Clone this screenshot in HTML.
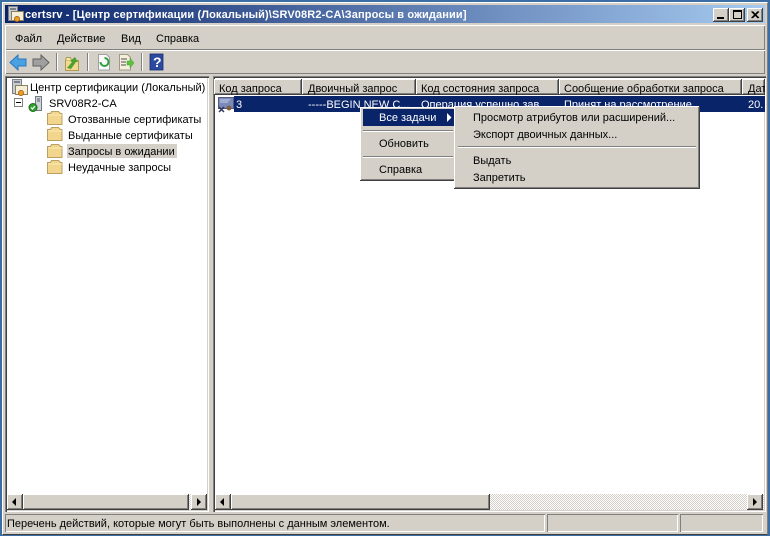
<!DOCTYPE html>
<html><head><meta charset="utf-8"><style>
html,body{margin:0;padding:0;width:770px;height:536px;overflow:hidden;background:#3a6ea5}
*{box-sizing:border-box}
.a{position:absolute}
#w{position:absolute;left:2px;top:2px;width:766px;height:533px;background:#d4d0c8;border-top:1px solid #fff;border-left:1px solid #fff;border-right:1px solid #808080;border-bottom:1px solid #404040;}
.t{position:absolute;white-space:nowrap;font:11px/17px "Liberation Sans",sans-serif;color:#000}
.btn{position:absolute;background:#d4d0c8;box-shadow:inset -1px -1px 0 #404040,inset 1px 1px 0 #fff,inset -2px -2px 0 #808080}
.hd{position:absolute;top:79px;height:16px;background:#d4d0c8;box-shadow:inset -1px -1px 0 #404040,inset 1px 1px 0 #fff,inset -2px -2px 0 #808080}
.sun{position:absolute;box-shadow:inset 1px 1px 0 #808080,inset -1px -1px 0 #fff}
.pane{position:absolute;background:#fff;box-shadow:inset 1px 1px 0 #808080,inset 2px 2px 0 #404040,inset -1px -1px 0 #fff,inset -2px -2px 0 #d4d0c8}
.sep{position:absolute;height:2px;border-top:1px solid #808080;border-bottom:1px solid #fff}
.dither{position:absolute;background-color:#fff;background-image:conic-gradient(#d4d0c8 25%,#fff 0 50%,#d4d0c8 0 75%,#fff 0);background-size:2px 2px}
.menu{position:absolute;background:#d4d0c8;box-shadow:inset -1px -1px 0 #404040,inset 1px 1px 0 #fff,inset -2px -2px 0 #808080}
</style></head><body>
<div id="w"></div>
<div class="a" style="left:5px;top:5px;width:760px;height:18px;background:linear-gradient(90deg,#0a246a,#a6caf0)"></div>
<svg class="a" style="left:7px;top:5px" width="18" height="18" viewBox="0 0 18 18"><rect x="1.500" y="1.500" width="9" height="14" fill="#c8ccd0" stroke="#7a8088"/><rect x="3" y="3" width="6" height="2" fill="#7a8088"/><rect x="4.500" y="6.500" width="12" height="9" fill="#f5efd8" stroke="#8a8060"/><circle cx="10" cy="14" r="2.600" fill="#e8a020" stroke="#a05010" stroke-width=".7"/></svg>
<div class="t" style="left:25px;top:7px;color:#fff;font-weight:bold;letter-spacing:.13px">certsrv - [Центр сертификации (Локальный)\SRV08R2-CA\Запросы в ожидании]</div>
<div class="btn" style="left:713px;top:8px;width:16px;height:14px"></div>
<div class="a" style="left:717px;top:17px;width:7px;height:2px;background:#000"></div>
<div class="btn" style="left:729px;top:8px;width:16px;height:14px"></div>
<div class="a" style="left:733px;top:10px;width:9px;height:9px;border:1px solid #000;border-top-width:2px"></div>
<div class="btn" style="left:747px;top:8px;width:16px;height:14px"></div>
<svg class="a" style="left:747px;top:8px" width="16" height="14"><path d="M4.500 3.500L11 10M5.500 3.500L12 10M11 3.500L4.500 10M12 3.500L5.500 10" stroke="#000" stroke-width="1"/></svg>

<div class="a" style="left:5px;top:25px;width:760px;height:25px;box-shadow:inset 1px 1px 0 #fff,inset -1px -1px 0 #808080"></div>
<div class="a" style="left:5px;top:50px;width:760px;height:24px;box-shadow:inset 1px 1px 0 #fff,inset -1px -1px 0 #808080"></div>
<div class="t" style="left:15px;top:31px">Файл</div>
<div class="t" style="left:57px;top:31px">Действие</div>
<div class="t" style="left:121px;top:31px">Вид</div>
<div class="t" style="left:156px;top:31px">Справка</div>

<svg class="a" style="left:0;top:45px" width="175" height="40">
<path d="M10 17.500l8-7.500v4h8v7h-8v4z" fill="#4aa0e0" stroke="#2a78c0"/>
<path d="M49 17.500l-8-7.500v4h-8v7h8v4z" fill="#a0a0a0" stroke="#606060"/>
<rect x="56" y="8" width="1" height="18" fill="#808080"/><rect x="57" y="8" width="1" height="18" fill="#fff"/>
<path d="M65.500 15.500h13v10h-13z" fill="#f2d890" stroke="#b09a50"/><path d="M65.500 15.500l1-3h4l1 3" fill="#f8e8a8" stroke="#b09a50"/><path d="M67 23l5-6-2-1 5-4 3 5h-2l-5 7z" fill="#50a030"/>
<rect x="87" y="8" width="1" height="18" fill="#808080"/><rect x="88" y="8" width="1" height="18" fill="#fff"/>
<path d="M98.500 9.500h8l3 3v12.500h-11z" fill="#fafafa" stroke="#a0a0a0"/><path d="M100.500 17a4 4 0 1 0 4-4" fill="none" stroke="#30a040" stroke-width="2"/>
<path d="M119.500 9.500h8l3 3v12.500h-11z" fill="#f5f0dc" stroke="#a09a80"/><path d="M121 14h6M121 17h5M121 20h5" stroke="#505050"/><path d="M127 16h3v-3l4 5-4 5v-3h-3z" fill="#60c040" stroke="#40a030" stroke-width=".5"/>
<rect x="141" y="8" width="1" height="18" fill="#808080"/><rect x="142" y="8" width="1" height="18" fill="#fff"/>
<rect x="150" y="9" width="13" height="16" fill="#2a4aa0" stroke="#1a2a70" stroke-width=".8"/><text x="153" y="22" fill="#fff" font-family="Liberation Sans" font-size="14" font-weight="bold">?</text>
</svg>

<div class="pane" style="left:5px;top:76px;width:204px;height:436px"></div>
<div class="pane" style="left:213px;top:76px;width:553px;height:436px"></div>

<!-- Tree -->
<svg class="a" style="left:11px;top:79px" width="18" height="18"><rect x="1.500" y="0.500" width="9" height="14" fill="#c8ccd0" stroke="#7a8088"/><rect x="3" y="2" width="6" height="2" fill="#7a8088"/><rect x="4.500" y="6.500" width="12" height="9" fill="#f5efd8" stroke="#8a8060"/><circle cx="10" cy="14" r="2.600" fill="#e8a020" stroke="#a05010" stroke-width=".7"/></svg>
<div class="t" style="left:30px;top:80px">Центр сертификации (Локальный)</div>
<div class="a" style="left:14px;top:98px;width:9px;height:9px;border:1px solid #808080;background:#fff"></div>
<div class="a" style="left:16px;top:102px;width:5px;height:1px;background:#000"></div>
<svg class="a" style="left:28px;top:95px" width="16" height="18"><rect x="7.500" y="1.500" width="6" height="14" fill="#d0d4d8" stroke="#707880"/><path d="M9 4h3M9 6h3" stroke="#505860"/><circle cx="5" cy="12.500" r="4" fill="#30a030" stroke="#1a6a1a"/><path d="M3 12.500l1.500 1.500 2.500-3" stroke="#fff" stroke-width="1.200" fill="none"/></svg>
<div class="t" style="left:49px;top:96px">SRV08R2-CA</div>
<svg class="a" style="left:47px;top:110px" width="16" height="66">
<g id="f"><path d="M.5 3.500h3l1-2h7l2 2h1.500v11h-14.500z" fill="#f2d68e" stroke="#b8a060"/><path d="M1 5h14" stroke="#fbeab8"/></g>
<use href="#f" y="16"/><use href="#f" y="33"/><use href="#f" y="49"/>
</svg>
<div class="a" style="left:67px;top:144px;width:110px;height:14px;background:#d4d0c8"></div>
<div class="t" style="left:68px;top:112px">Отозванные сертификаты</div>
<div class="t" style="left:68px;top:128px">Выданные сертификаты</div>
<div class="t" style="left:68px;top:144px">Запросы в ожидании</div>
<div class="t" style="left:68px;top:160px">Неудачные запросы</div>

<!-- Headers -->
<div class="hd" style="left:214px;width:88px"></div>
<div class="hd" style="left:302px;width:114px"></div>
<div class="hd" style="left:416px;width:143px"></div>
<div class="hd" style="left:559px;width:183px"></div>
<div class="hd" style="left:742px;width:23px"></div>
<div class="t" style="left:219px;top:81px">Код запроса</div>
<div class="t" style="left:308px;top:81px">Двоичный запрос</div>
<div class="t" style="left:421px;top:81px">Код состояния запроса</div>
<div class="t" style="left:564px;top:81px">Сообщение обработки запроса</div>
<div class="a" style="left:742px;top:79px;width:23px;height:16px;overflow:hidden"><div class="t" style="left:6px;top:2px">Дата</div></div>

<!-- Row -->
<div class="a" style="left:234px;top:96px;width:531px;height:16px;background:#0a246a"></div>
<svg class="a" style="left:218px;top:97px" width="16" height="16"><rect x=".5" y=".5" width="15" height="11" fill="#7a8ab8" stroke="#505a80"/><path d="M2 3h10M2 5h8" stroke="#c8d0e8"/><path d="M1 15l5-5M1 10l5 5" stroke="#303860" stroke-width="1.500"/><circle cx="11" cy="11" r="2.500" fill="#806040"/></svg>
<div class="t" style="left:236px;top:97px;color:#fff">3</div>
<div class="t" style="left:308px;top:97px;color:#fff">-----BEGIN NEW C...</div>
<div class="t" style="left:421px;top:97px;color:#fff">Операция успешно зав...</div>
<div class="t" style="left:564px;top:97px;color:#fff">Принят на рассмотрение.</div>
<div class="t" style="left:748px;top:97px;color:#fff">20.</div>

<!-- Context menu 1 -->
<div class="menu" style="left:360px;top:107px;width:96px;height:74px"></div>
<div class="a" style="left:363px;top:109px;width:91px;height:17px;background:#0a246a"></div>
<div class="t" style="left:379px;top:110px;color:#fff">Все задачи</div>
<svg class="a" style="left:447px;top:113px" width="6" height="9"><path d="M0 0l4.500 4.500-4.500 4.500z" fill="#fff"/></svg>
<div class="sep" style="left:363px;top:130px;width:90px"></div>
<div class="t" style="left:379px;top:136px">Обновить</div>
<div class="sep" style="left:363px;top:156px;width:90px"></div>
<div class="t" style="left:379px;top:162px">Справка</div>

<!-- Submenu -->
<div class="menu" style="left:454px;top:106px;width:246px;height:83px"></div>
<div class="t" style="left:473px;top:110px">Просмотр атрибутов или расширений...</div>
<div class="t" style="left:473px;top:127px">Экспорт двоичных данных...</div>
<div class="sep" style="left:458px;top:146px;width:238px"></div>
<div class="t" style="left:473px;top:153px">Выдать</div>
<div class="t" style="left:473px;top:170px">Запретить</div>

<!-- Scrollbars -->
<div class="dither" style="left:7px;top:494px;width:200px;height:16px"></div>
<div class="btn" style="left:7px;top:494px;width:16px;height:16px"></div>
<svg class="a" style="left:12px;top:498px" width="5" height="8"><path d="M4 0v8l-4-4z"/></svg>
<div class="btn" style="left:23px;top:494px;width:166px;height:16px"></div>
<div class="btn" style="left:191px;top:494px;width:16px;height:16px"></div>
<svg class="a" style="left:197px;top:498px" width="5" height="8"><path d="M0 0v8l4-4z"/></svg>

<div class="dither" style="left:215px;top:494px;width:549px;height:16px"></div>
<div class="btn" style="left:215px;top:494px;width:16px;height:16px"></div>
<svg class="a" style="left:220px;top:498px" width="5" height="8"><path d="M4 0v8l-4-4z"/></svg>
<div class="btn" style="left:231px;top:494px;width:259px;height:16px"></div>
<div class="btn" style="left:747px;top:494px;width:16px;height:16px"></div>
<svg class="a" style="left:753px;top:498px" width="5" height="8"><path d="M0 0v8l4-4z"/></svg>

<!-- Status -->
<div class="sun" style="left:5px;top:514px;width:540px;height:18px"></div>
<div class="sun" style="left:547px;top:514px;width:131px;height:18px"></div>
<div class="sun" style="left:680px;top:514px;width:83px;height:18px"></div>
<div class="t" style="left:7px;top:516px">Перечень действий, которые могут быть выполнены с данным элементом.</div>
</body></html>
